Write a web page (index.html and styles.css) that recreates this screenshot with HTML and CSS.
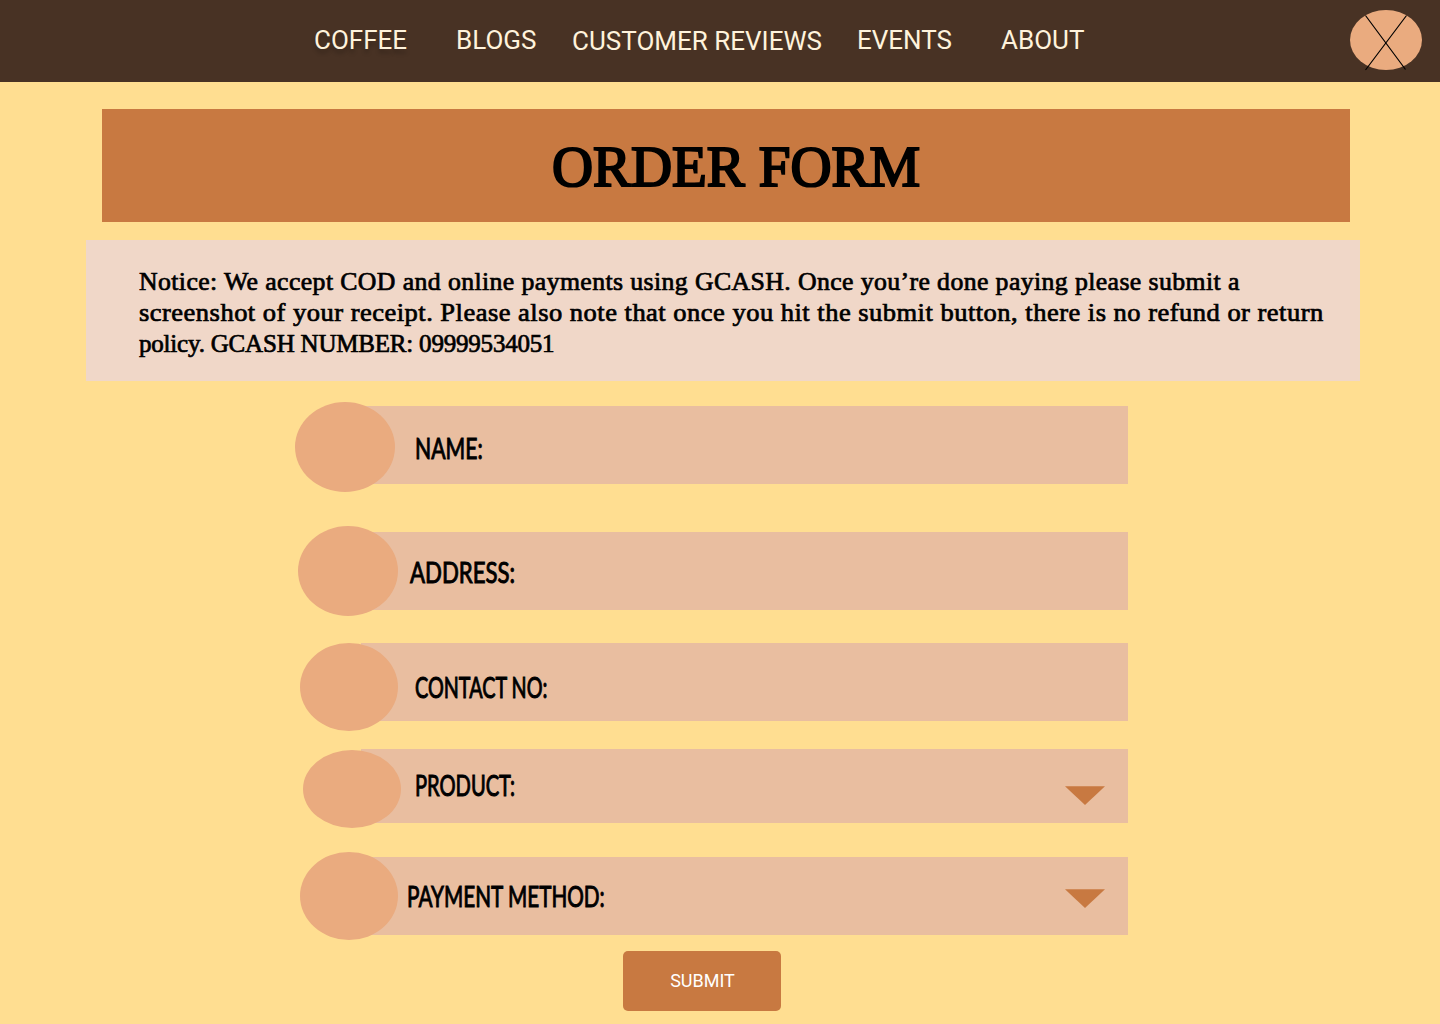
FILE: index.html
```html
<!DOCTYPE html>
<html lang="en">
<head>
<meta charset="utf-8">
<title>Order Form</title>
<link rel="stylesheet" href="styles.css">
</head>
<body>
<header class="topbar">
  <nav class="nav">
    <a class="nav-link shadow">COFFEE</a>
    <a class="nav-link">BLOGS</a>
    <a class="nav-link lowered">CUSTOMER REVIEWS</a>
    <a class="nav-link">EVENTS</a>
    <a class="nav-link">ABOUT</a>
  </nav>
  <svg class="close" width="72" height="62" viewBox="0 0 72 62">
    <ellipse cx="36" cy="30" rx="36" ry="30" fill="#eaab7f"/>
    <path d="M15.5 5.5L55.5 59.5M56.5 5.5L15.5 60" stroke="#000" stroke-width="1.2" fill="none"/>
  </svg>
</header>
<main>
  <h1 class="title"><span class="title-text">ORDER FORM</span></h1>
  <p class="notice">
    <span class="line line-1">Notice: We accept COD and online payments using GCASH. Once you’re done paying please submit a</span>
    <span class="line line-2">screenshot of your receipt. Please also note that once you hit the submit button, there is no refund or return</span>
    <span class="line line-3">policy. GCASH NUMBER: 09999534051</span>
  </p>
  <form class="form">
    <div class="field name"><i class="dot"></i><label class="label">NAME:</label></div>
    <div class="field address"><i class="dot"></i><label class="label">ADDRESS:</label></div>
    <div class="field contact"><i class="dot"></i><label class="label">CONTACT NO:</label></div>
    <div class="field product"><i class="dot"></i><label class="label">PRODUCT:</label>
      <svg class="arrow" width="40" height="19" viewBox="0 0 40 19"><path d="M0 .3H40L20 19Z" fill="#c87941"/></svg>
    </div>
    <div class="field payment"><i class="dot"></i><label class="label">PAYMENT METHOD:</label>
      <svg class="arrow" width="40" height="19" viewBox="0 0 40 19"><path d="M0 .3H40L20 19Z" fill="#c87941"/></svg>
    </div>
    <button class="submit" type="button">SUBMIT</button>
  </form>
</main>
</body>
</html>
```
FILE: styles.css
```css
* { box-sizing: border-box; }
body {
  margin: 0;
  height: 1024px;
  overflow: hidden;
  background: #ffde91;
  color: #000;
}
.topbar {
  display: flex;
  justify-content: space-between;
  height: 82px;
  padding: 10px 18px 0 314px;
  background: #483224;
}
.nav {
  display: grid;
  grid-template-columns: 142px 116px 285px 144px auto;
  font: 26px/30px Roboto, sans-serif;
  color: #fff3dc;
  padding-top: 15px;
  white-space: nowrap;
}
.shadow { text-shadow: 0 4px 4px rgba(0, 0, 0, .25); }
.lowered { padding-top: 1px; }
.close { display: block; }

.title {
  width: 1248px;
  height: 113px;
  margin: 27px 0 0 102px;
  padding-left: 450px;
  background: #c87941;
  font: 58px/115px "Liberation Serif", serif;
  -webkit-text-stroke: 2.2px #000;
  white-space: nowrap;
}
.title-text, .line, .label {
  display: block;
  width: max-content;
  transform-origin: 0 50%;
}
.title-text { transform: scaleX(.98); }
.notice {
  width: 1274px;
  height: 141px;
  margin: 18px 0 0 86px;
  padding: 26px 0 0 53px;
  background: #f0d7c8;
  font: 25px/31px "Liberation Serif", serif;
  -webkit-text-stroke: .7px #000;
  white-space: nowrap;
}
.line-1 { transform: scaleX(1.03); letter-spacing: .39px; }
.line-2 { transform: scaleX(1.06); letter-spacing: .46px; }
.line-3 { letter-spacing: -.2px; }

.form { padding: 25px 0 0 361px; }
.field {
  position: relative;
  display: flex;
  justify-content: space-between;
  width: 767px;
  height: 78px;
  background: #e9bea0;
  font: 29px/34px Lato, sans-serif;
  -webkit-text-stroke: 1px #000;
}
.dot {
  position: absolute;
  border-radius: 50%;
  background: #eaab7f;
  width: 98px;
  height: 88px;
}
.name .dot { left: -66px; top: -4px; width: 100px; height: 90px; }
.address .dot { left: -63px; top: -6px; width: 100px; height: 90px; }
.contact .dot { left: -61px; top: 0; }
.product .dot { left: -58px; top: 1px; height: 78px; }
.payment .dot { left: -61px; top: -5px; }

.name { padding: 25px 0 0 54px; }
.address { margin-top: 48px; padding: 23px 0 0 49px; }
.contact { margin-top: 33px; padding: 27px 0 0 54px; }
.product { margin-top: 28px; height: 74px; padding: 19px 23px 0 54px; }
.payment { margin-top: 34px; padding: 22px 23px 0 46px; }
.name .label { transform: scaleX(.73); }
.address .label { transform: scaleX(.765); }
.contact .label { transform: scaleX(.682); }
.product .label { transform: scaleX(.693); }
.payment .label { transform: scaleX(.715); }
.arrow { display: block; }
.product .arrow { margin-top: 18px; }
.payment .arrow { margin-top: 10px; }

.submit {
  display: block;
  width: 158px;
  height: 60px;
  margin: 16px 0 0 262px;
  padding: 0 0 0 1px;
  border: 0;
  border-radius: 5px;
  background: #c87941;
  color: #fff;
  font: 18px/60px Roboto, sans-serif;
}
```
